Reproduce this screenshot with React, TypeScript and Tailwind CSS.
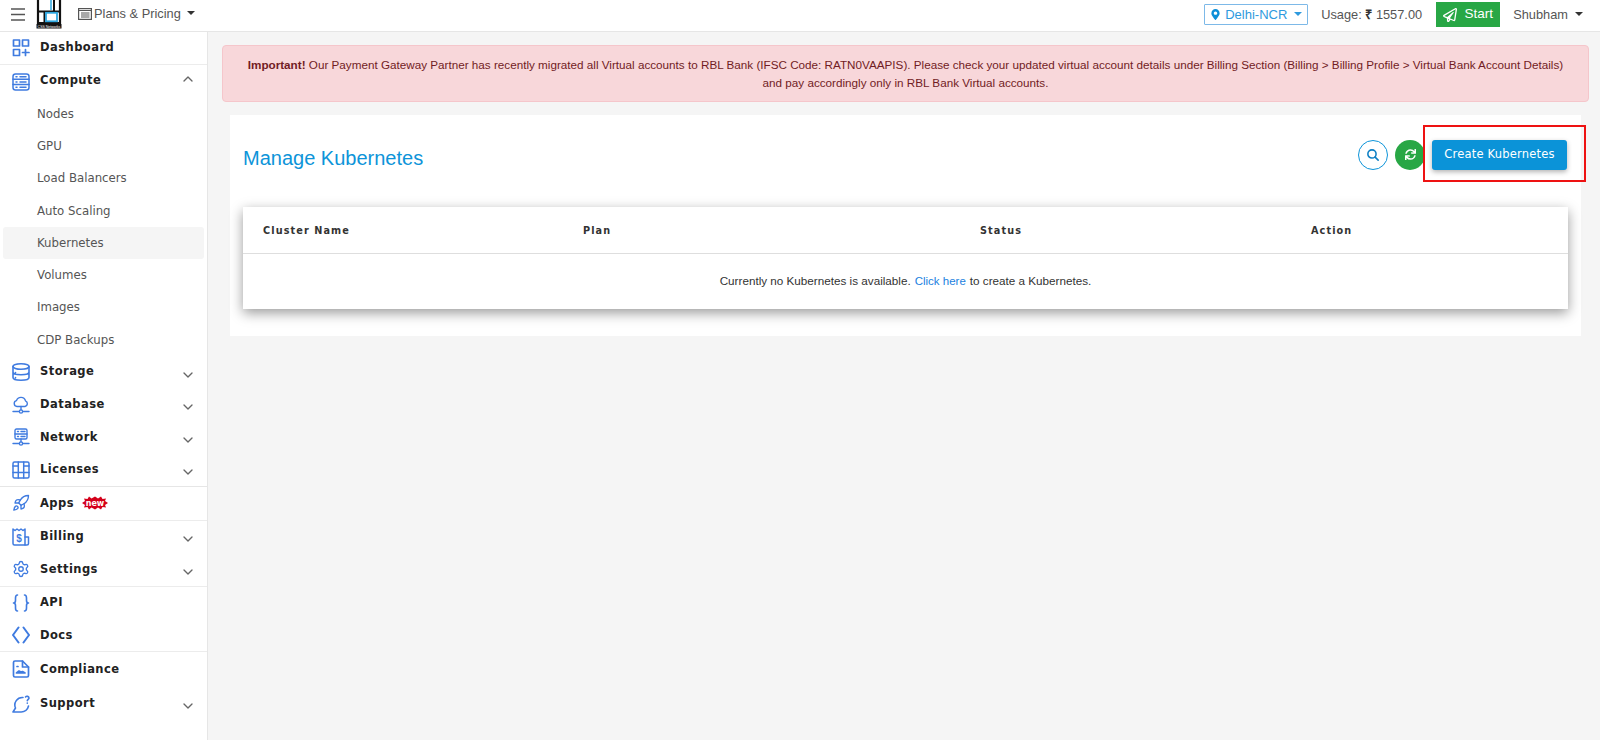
import React from "react";
import { ChevronUp, ChevronDown, Rocket, Settings } from "lucide-react";
import { FaSync, FaRegPaperPlane, FaMapMarkerAlt } from "react-icons/fa";

const I = ({ children, sw = 1.6 }: { children: React.ReactNode; sw?: number }) => (
  <svg width="18" height="18" viewBox="0 0 18 18" fill="none" stroke="#3f7be0" strokeWidth={sw} strokeLinecap="round" strokeLinejoin="round" className="shrink-0">
    {children}
  </svg>
);

const icons: Record<string, React.ReactNode> = {
  Dashboard: (
    <I sw={1.7}>
      <rect x="1.500" y="1" width="6" height="6" />
      <rect x="10.500" y="1" width="6" height="6" />
      <rect x="1.500" y="10.500" width="6" height="6" />
      <path d="M13.500 10.500v6M10.500 13.500h6.500" />
    </I>
  ),
  Compute: (
    <I sw={1.5}>
      <rect x="1" y="1" width="16" height="16" rx="2.500" />
      <path d="M1 6.300h16M1 11.600h16M4 3.700h1M8 3.700h6M4 9h1M8 9h6M4 14.300h1M8 14.300h6" />
    </I>
  ),
  Storage: (
    <I sw={1.6}>
      <ellipse cx="9" cy="3.500" rx="8" ry="2.700" />
      <path d="M1 3.500v11c0 1.500 3 2.700 8 2.700s8-1.200 8-2.700v-11M1 9c0 1.500 3 2.700 8 2.700S17 10.500 17 9M3.500 9.500v.5M3.500 14.500v.5" />
    </I>
  ),
  Database: (
    <I sw={1.4}>
      <path d="M5 10.500a3 3 0 0 1-.5-5.900 4.700 4.700 0 0 1 9 .2 3 3 0 0 1-.5 5.700z" />
      <path d="M9 10.500v3.500M1 15.500h6M11 15.500h6" />
      <circle cx="9" cy="15.500" r="1.600" />
    </I>
  ),
  Network: (
    <I sw={1.4}>
      <rect x="3" y="1" width="12" height="10" rx="1.500" />
      <path d="M3 6h12M5.500 3.500h1M9 3.500h4M5.500 8.500h1M9 8.500h4M9 11v3M1 15.500h6M11 15.500h6" />
      <circle cx="9" cy="15.500" r="1.600" />
    </I>
  ),
  Licenses: (
    <I sw={1.5}>
      <rect x="1" y="1" width="16" height="16" rx="1.500" />
      <path d="M6.300 1v16M11.700 1v16M1 11.500h16M1 5h5.300M11.700 5H17" />
    </I>
  ),
  Apps: <Rocket size={18} color="#3f7be0" strokeWidth={1.800} className="shrink-0" />,
  Billing: (
    <I sw={1.500}>
      <path d="M13 17H2.500A1.500 1.500 0 0 1 1 15.500V1l2 1.500L5 1l2 1.500L9 1l2 1.500L13 1z" />
      <path d="M13 9h3.500v6.500A1.500 1.500 0 0 1 15 17h-2" />
      <text x="7" y="13.500" fontSize="10" fontWeight="700" fill="#3f7be0" stroke="none" textAnchor="middle" fontFamily="'Liberation Sans', sans-serif">$</text>
    </I>
  ),
  Settings: <Settings size={18} color="#3f7be0" strokeWidth={1.800} className="shrink-0" />,
  API: (
    <I sw={1.600}>
      <path d="M5.500 1C3.500 1 3.500 2.200 3.500 4v2.500c0 1.300-.6 2.500-2 2.500 1.400 0 2 1.200 2 2.500V14c0 1.800 0 3 2 3M12.500 1c2 0 2 1.200 2 3v2.500c0 1.300.6 2.500 2 2.500-1.400 0-2 1.200-2 2.500V14c0 1.800 0 3-2 3" />
    </I>
  ),
  Docs: (
    <I sw={2}>
      <path d="M6.500 1.500L1 9l5.500 7.500M11.500 1.500L17 9l-5.500 7.500" />
    </I>
  ),
  Compliance: (
    <I sw={1.700}>
      <path d="M10.500 1H3A1.500 1.500 0 0 0 1.500 2.500v13A1.500 1.500 0 0 0 3 17h12a1.500 1.500 0 0 0 1.500-1.500V7z" />
      <path d="M10.500 1v6h6M5 6.500h1M4.500 13l2.500-2 2 1 1.500-.5 2.500 1.500z" />
    </I>
  ),
  Support: (
    <I sw={1.600}>
      <path d="M11 2.500A7.500 7.500 0 0 0 3.500 13L1 17h8a7.500 7.500 0 0 0 7.500-6" />
      <path d="M13.500 2a2 2 0 0 1 3.500 1c0 1.200-1.700 1.500-1.700 2.800M15.300 8v.2" />
    </I>
  ),
};

const NewBadge = () => (
  <svg width="26" height="14" viewBox="0 0 26 14" className="ml-[8px] shrink-0">
    <polygon fill="#d4001a" points="0,7 3,5 2,2.500 5.500,3 7,0.500 9.500,2.500 13,0.500 16,2.500 19,0.500 20.500,3 24,2.500 23,5 26,7 23,9 24,11.500 20.500,11 19,13.500 16,11.500 13,13.500 9.500,11.500 7,13.500 5.500,11 2,11.500 3,9" />
    <text x="13" y="9.500" textAnchor="middle" fontSize="8" fontWeight="700" fill="#fff" fontFamily="'DejaVu Sans', sans-serif">new</text>
  </svg>
);

const labelOffset: Record<string, string> = {
  Network: "mt-0",
  Licenses: "mt-0",
  Apps: "mt-0",
  Settings: "mt-0",
  API: "mt-0",
  Docs: "mt-[1px]",
  Compliance: "mt-0",
  Support: "mt-[1px]",
};

const Head = ({ label, chev, badge, h = "h-[32.4px]" }: { label: string; chev?: "up" | "down"; badge?: boolean; h?: string }) => (
  <div className={`flex items-center ${h} pl-[12px] pr-[11px]`}>
    {icons[label]}
    <span className={`ml-[10px] text-[11.500px] font-bold tracking-[0.45px] text-[#222] ${labelOffset[label] ?? "-mt-[1px]"}`}>{label}</span>
    {badge && <NewBadge />}
    {chev === "up" && <ChevronUp size={16} color="#666" className="ml-auto -mt-[6px]" />}
    {chev === "down" && <ChevronDown size={16} color="#666" className="ml-auto mt-[5px]" />}
  </div>
);

const subs = ["Nodes", "GPU", "Load Balancers", "Auto Scaling", "Kubernetes", "Volumes", "Images", "CDP Backups"];

function Sidebar() {
  return (
    <aside className="w-[208px] shrink-0 bg-white border-r border-[#e6e6e6] font-['DejaVu_Sans',sans-serif]">
      <Head label="Dashboard" />
      <div className="border-t border-[#ececec]">
        <Head label="Compute" chev="up" />
        {subs.map((s) => (
          <div key={s} className={`h-[32.3px] ml-[3px] mr-[3px] pl-[34px] pt-[1px] flex items-center text-[11.750px] text-[#555] ${s === "Kubernetes" ? "bg-[#f5f5f5] rounded-[3px]" : ""}`}>
            {s}
          </div>
        ))}
        {["Storage", "Database", "Network", "Licenses"].map((s) => (
          <Head key={s} label={s} chev="down" />
        ))}
      </div>
      <div className="border-t border-[#e6e6e6]">
        <Head label="Apps" badge h="h-[33px]" />
      </div>
      <div className="border-t border-[#ececec]">
        <Head label="Billing" chev="down" />
        <Head label="Settings" chev="down" />
      </div>
      <div className="border-t border-[#ececec]">
        <Head label="API" />
        <Head label="Docs" />
      </div>
      <div className="border-t border-[#ececec]">
        <Head label="Compliance" h="h-[34px]" />
        <Head label="Support" chev="down" h="h-[34.500px]" />
      </div>
    </aside>
  );
}

const Caret = ({ c = "#333" }: { c?: string }) => (
  <span className="inline-block w-0 h-0 border-x-[4px] border-x-transparent border-t-[4px]" style={{ borderTopColor: c }} />
);

function Topbar() {
  return (
    <header className="h-[32px] shrink-0 bg-white border-b border-[#e6e6e6] flex items-center font-['Liberation_Sans',sans-serif] text-[12.800px] text-[#555]">
      <svg width="14" height="13" viewBox="0 0 14 13" className="ml-[11px] -mt-[2px]" fill="none" stroke="#555" strokeWidth="1.300">
        <path d="M0 1h14M0 6.500h14M0 12h14" />
      </svg>
      <svg width="26" height="29" viewBox="0 0 26 29" className="ml-[11px] -mt-[3px]">
        <path d="M2 0v23h22V0" fill="none" stroke="#111" strokeWidth="2.200" />
        <path d="M8.500 11v12M2 11.500h22M18 0v11" fill="none" stroke="#111" strokeWidth="2" />
        <path d="M15 0v10" fill="none" stroke="#2ea7e0" strokeWidth="1.500" />
        <rect x="10" y="12.800" width="11" height="8.500" fill="none" stroke="#2ea7e0" strokeWidth="1.800" />
        <rect x="0.500" y="24" width="25" height="4.500" fill="#111" />
        <text x="13" y="27.500" textAnchor="middle" fontSize="3.500" fill="#fff" fontFamily="'Liberation Sans', sans-serif">CSS Networks</text>
      </svg>
      <svg width="14" height="12" viewBox="0 0 14 12" className="ml-[16px] -mt-[3px]" fill="none" stroke="#555" strokeWidth="1.200">
        <rect x="0.600" y="0.600" width="12.800" height="10.800" />
        <path d="M0.600 2.500h12.800M3 5h8.500M3 7h8.500M3 9h8.500" />
      </svg>
      <span className="ml-[2px] -mt-[3px]">Plans &amp; Pricing</span>
      <span className="ml-[6px] -mt-[5px] flex"><Caret /></span>

      <div className="ml-auto flex items-center -mt-[2px]">
        <div className="h-[21px] w-[104px] border border-[#7db9e8] rounded-[1px] flex items-center pl-[5px] text-[#2e9ade] text-[13px]">
          <FaMapMarkerAlt size={11} color="#0d8fd8" />
          <span className="ml-[4px]">Delhi-NCR</span>
          <span className="ml-[7px] -mt-[2px] flex"><Caret c="#2e9ade" /></span>
        </div>
        <span className="ml-[13px] w-[115px] whitespace-nowrap">Usage: <b className="font-bold text-[#333]">₹</b> 1557.00</span>
        <button className="h-[25px] w-[64px] bg-[#28a745] text-white flex items-center justify-center gap-[7px] text-[13.500px]">
          <FaRegPaperPlane size={14} color="#fff" />
          Start
        </button>
        <span className="ml-[13px]">Shubham</span>
        <span className="ml-[7px] mr-[17px] -mt-[2px] flex"><Caret /></span>
      </div>
    </header>
  );
}

function Main() {
  return (
    <main className="flex-1 min-w-0 bg-[#f5f5f5] pt-[13px] pl-[14px] pr-[11px]">
      <div className="h-[57px] bg-[#f8d7da] border border-[#f5c6cb] rounded-[4px] text-[#721c24] text-[11.700px] leading-[18px] text-center pt-[10px] px-[24px] font-['Liberation_Sans',sans-serif]">
        <b>Important!</b> Our Payment Gateway Partner has recently migrated all Virtual accounts to RBL Bank (IFSC Code: RATN0VAAPIS). Please check your updated virtual account details under Billing Section (Billing &gt; Billing Profile &gt; Virtual Bank Account Details) and pay accordingly only in RBL Bank Virtual accounts.
      </div>
      <section className="relative mt-[13px] ml-[8px] mr-[8px] h-[221px] bg-white px-[13px]">
        <div className="flex items-center h-[92px]">
          <h1 className="text-[20px] text-[#0d94d9] font-['Liberation_Sans',sans-serif] -mt-[7px]">Manage Kubernetes</h1>
          <div className="ml-auto flex items-center -mt-[13px] gap-[7px] pr-[1px]">
            <button className="w-[30px] h-[30px] rounded-full border border-[#0d94d9] bg-white flex items-center justify-center">
              <svg width="12" height="12" viewBox="0 0 14 14" fill="none" stroke="#0d7fc4" strokeWidth="1.800" strokeLinecap="round">
                <circle cx="5.800" cy="5.800" r="4.800" />
                <path d="M9.500 9.500l3.500 3.500" />
              </svg>
            </button>
            <button className="w-[30px] h-[30px] rounded-full bg-[#28a745] flex items-center justify-center">
              <FaSync size={11} color="#fff" />
            </button>
            <button className="w-[135px] h-[30px] pt-[1px] rounded-[3px] bg-[#0b93d8] text-white text-[11.500px] tracking-[0.2px] font-['DejaVu_Sans',sans-serif] shadow-[0_2px_5px_rgba(0,0,0,0.3)]">
              Create Kubernetes
            </button>
          </div>
        </div>
        <div className="h-[102px] bg-white shadow-[0_4px_12px_rgba(0,0,0,0.4)]">
          <div className="h-[47px] pt-[3px] border-b border-[#dedede] flex items-center text-[9.700px] font-bold tracking-[1.100px] text-[#333] font-['DejaVu_Sans',sans-serif]">
            <span className="w-[340px] pl-[20px]">Cluster Name</span>
            <span className="w-[397px]">Plan</span>
            <span className="w-[331px]">Status</span>
            <span>Action</span>
          </div>
          <p className="h-[55px] leading-[54px] text-center text-[11.700px] text-[#333] font-['Liberation_Sans',sans-serif]">
            Currently no Kubernetes is available.<span className="ml-[4px] text-[11.500px] text-[#1b7fe0]">Click here</span><span className="ml-[4px]">to create a Kubernetes.</span>
          </p>
        </div>
        <div className="absolute left-[1193px] top-[10px] w-[163px] h-[57px] border-[2px] border-[#ee1212]" />
      </section>
    </main>
  );
}

export default function App() {
  return (
    <div className="h-[740px] w-[1600px] overflow-hidden flex flex-col bg-white">
      <Topbar />
      <div className="flex flex-1 min-h-0">
        <Sidebar />
        <Main />
      </div>
    </div>
  );
}
